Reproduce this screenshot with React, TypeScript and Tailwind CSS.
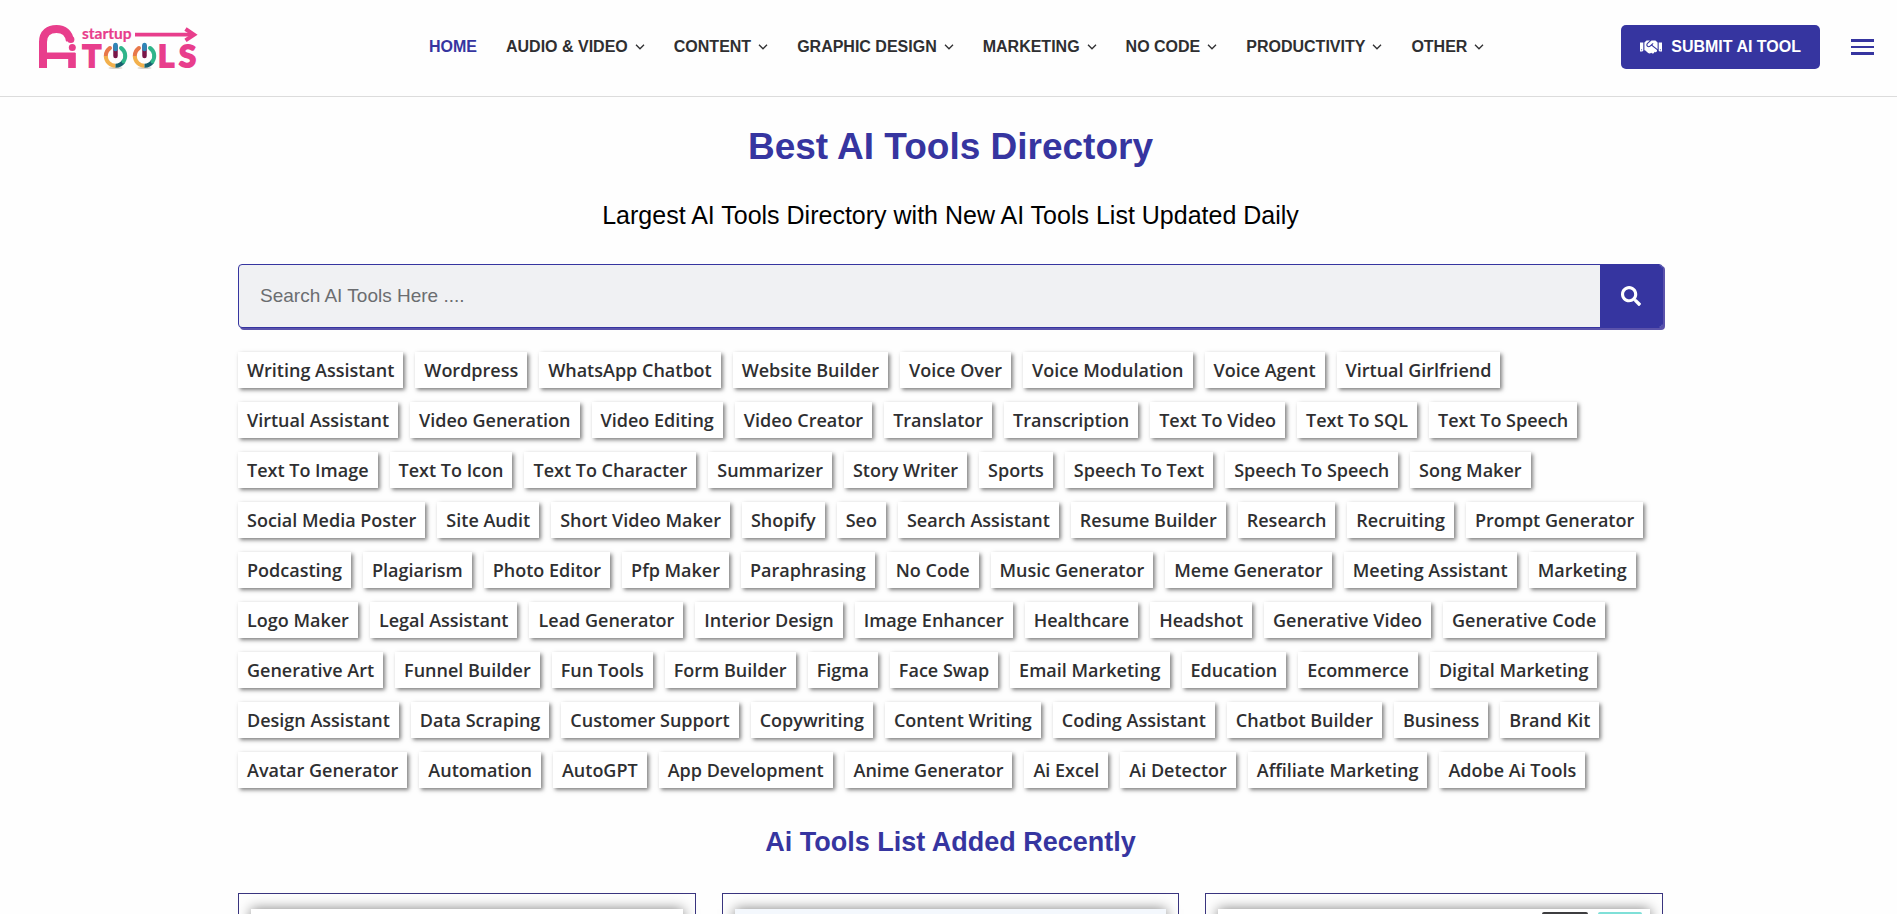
import { FaHandshake, FaSearch } from "react-icons/fa";

const navItems = [
  "AUDIO & VIDEO",
  "CONTENT",
  "GRAPHIC DESIGN",
  "MARKETING",
  "NO CODE",
  "PRODUCTIVITY",
  "OTHER",
];

const tagRows = [
  ["Writing Assistant", "Wordpress", "WhatsApp Chatbot", "Website Builder", "Voice Over", "Voice Modulation", "Voice Agent", "Virtual Girlfriend"],
  ["Virtual Assistant", "Video Generation", "Video Editing", "Video Creator", "Translator", "Transcription", "Text To Video", "Text To SQL", "Text To Speech"],
  ["Text To Image", "Text To Icon", "Text To Character", "Summarizer", "Story Writer", "Sports", "Speech To Text", "Speech To Speech", "Song Maker"],
  ["Social Media Poster", "Site Audit", "Short Video Maker", "Shopify", "Seo", "Search Assistant", "Resume Builder", "Research", "Recruiting", "Prompt Generator"],
  ["Podcasting", "Plagiarism", "Photo Editor", "Pfp Maker", "Paraphrasing", "No Code", "Music Generator", "Meme Generator", "Meeting Assistant", "Marketing"],
  ["Logo Maker", "Legal Assistant", "Lead Generator", "Interior Design", "Image Enhancer", "Healthcare", "Headshot", "Generative Video", "Generative Code"],
  ["Generative Art", "Funnel Builder", "Fun Tools", "Form Builder", "Figma", "Face Swap", "Email Marketing", "Education", "Ecommerce", "Digital Marketing"],
  ["Design Assistant", "Data Scraping", "Customer Support", "Copywriting", "Content Writing", "Coding Assistant", "Chatbot Builder", "Business", "Brand Kit"],
  ["Avatar Generator", "Automation", "AutoGPT", "App Development", "Anime Generator", "Ai Excel", "Ai Detector", "Affiliate Marketing", "Adobe Ai Tools"],
];

function PowerO({ cx }: { cx: number }) {
  return (
    <g fill="none" strokeWidth="4">
      <ellipse cx={cx} cy="44" rx="7" ry="1" fill="#d9d4cc" />
      <path d={`M${cx - 5.5} 24 A9.7 9.7 0 0 0 ${cx - 9.7} 32`} stroke="#e8784a" strokeLinecap="round" />
      <path d={`M${cx - 9.7} 32 A9.7 9.7 0 0 0 ${cx} 41.7`} stroke="#f2b04c" />
      <path d={`M${cx} 41.7 A9.7 9.7 0 0 0 ${cx + 8} 37.5`} stroke="#17616e" />
      <path d={`M${cx + 8} 37.5 A9.7 9.7 0 0 0 ${cx + 5.5} 24`} stroke="#2fb58a" strokeLinecap="round" />
      <path d={`M${cx} 22 V32`} stroke="#7a1648" strokeWidth="4.5" strokeLinecap="round" />
      <path d={`M${cx} 21 V25`} stroke="#2c86b8" strokeWidth="4.5" strokeLinecap="round" />
    </g>
  );
}

function Logo() {
  return (
    <svg viewBox="0 -5 162 56" className="h-14 w-[162px] overflow-visible" role="img" aria-label="Startup Ai Tools">
      <g fill="none" stroke="#e83e8c" strokeWidth="8">
        <path d="M5 44 V18 C5 9 11 5 18.500 5 C26 5 31 9 32 17" />
        <path d="M5 31.700 H34 V44" strokeWidth="6.500" />
        <path d="M34 29 V44" strokeWidth="7.500" />
        <path d="M97 10.700 H155" strokeWidth="3.800" />
        <path d="M147.500 5 L156 10.700 L147.500 16.400" strokeWidth="4" />
      </g>
      <circle cx="32.800" cy="15.500" r="3.600" fill="#e83e8c" />
      <circle cx="34.300" cy="23.500" r="3.500" fill="#e83e8c" />
      <g fill="#e83e8c" stroke="#e83e8c" fontFamily="Lato, sans-serif" fontWeight="700">
        <text x="44" y="14.500" fontSize="15.500" strokeWidth="0.200">startup</text>
        <g fontSize="31" strokeWidth="2">
          <text x="44.500" y="43">T</text>
          <text x="120" y="43">L</text>
          <text x="141" y="43">S</text>
        </g>
      </g>
      <PowerO cx={77.5} />
      <PowerO cx={106.5} />
    </svg>
  );
}

function Chevron() {
  return (
    <svg viewBox="0 0 10 6" className="h-[6px] w-[10px]" fill="none" stroke="currentColor" strokeWidth="1.300" aria-hidden="true">
      <path d="M1 0.800 L5 4.800 L9 0.800" />
    </svg>
  );
}

export default function App() {
  return (
    <div className="h-screen overflow-hidden bg-[#fefefe] font-['Liberation_Sans',Arial,sans-serif] text-[#2f2f31]">
      <header className="flex h-[97px] items-center justify-between border-b border-[#dcdcdc] pr-[23px] pb-[2px] pl-[38px] text-base font-bold">
        <a href="#home" className="w-[162px] shrink-0">
          <Logo />
        </a>
        <nav className="ml-[229px] flex flex-1 items-center gap-[29px] whitespace-nowrap">
          <a href="#home" className="text-[#3635a0]">HOME</a>
          {navItems.map((item) => (
            <a key={item} href="#menu" className="flex items-center gap-[7px]">
              {item}
              <Chevron />
            </a>
          ))}
        </nav>
        <div className="flex shrink-0 items-center gap-[31px]">
          <a href="#submit" className="flex h-11 items-center gap-[9px] rounded-[5px] bg-[#3635a0] px-[19px] text-white">
            <FaHandshake className="h-[18px] w-[22px]" />
            SUBMIT AI TOOL
          </a>
          <button type="button" aria-label="Open menu" className="flex w-[23px] flex-col gap-1">
            <span className="h-[3px] w-full bg-[#3635a0]" />
            <span className="h-[2px] w-full bg-[#3635a0]" />
            <span className="h-[3px] w-full bg-[#3635a0]" />
          </button>
        </div>
      </header>

      <main className="pl-1">
        <div className="mx-auto max-w-[1425px]">
          <h1 className="mt-6 text-center text-[37px] leading-[52px] font-bold text-[#3635a0]">Best AI Tools Directory</h1>
          <p className="mt-6 text-center text-[25px] leading-9 text-black">Largest AI Tools Directory with New AI Tools List Updated Daily</p>

          <form role="search" className="mt-[31px] flex h-[64px] overflow-hidden rounded-[4px] border border-[#3635a0] bg-[#f0f1f3] shadow-[2px_2px_0_#5b53ab]">
            <input
              type="search"
              aria-label="Search AI tools"
              placeholder="Search AI Tools Here ...."
              className="min-w-0 flex-1 px-[21px] text-[19px] outline-none placeholder:text-[#6b6d70]"
            />
            <button type="submit" aria-label="Search" className="flex w-[62px] items-center justify-center bg-[#3635a0] text-white">
              <FaSearch className="size-5" />
            </button>
          </form>

          <div className="mt-6 flex flex-col gap-[14px] font-['Open_Sans',sans-serif] text-lg font-semibold whitespace-nowrap">
            {tagRows.map((row) => (
              <div key={row[0]} className="flex gap-3">
                {row.map((tag) => (
                  <a key={tag} href="#tag" className="flex h-9 items-center bg-white px-[9px] shadow-[2px_2px_4px_rgba(0,0,0,0.5)]">
                    {tag}
                  </a>
                ))}
              </div>
            ))}
          </div>

          <h2 className="mt-[34px] text-center text-[27px] leading-10 font-bold text-[#3635a0]">Ai Tools List Added Recently</h2>

          <div className="mt-[31px] grid grid-cols-3 gap-[26px]">
            <article className="h-80 border border-[#3a357f] px-3 pt-[15px]">
              <div className="h-60 bg-white shadow-[0_0_12px_rgba(0,0,0,0.5)]" />
            </article>
            <article className="h-80 border border-[#3a357f] px-3 pt-[15px]">
              <div className="h-60 bg-[#f4f8fd] shadow-[0_0_12px_rgba(0,0,0,0.5)]" />
            </article>
            <article className="h-80 border border-[#3a357f] px-3 pt-[15px]">
              <div className="flex h-60 justify-end gap-[10px] bg-white px-2 pt-[3px] shadow-[0_0_12px_rgba(0,0,0,0.5)]">
                <div className="h-5 w-[46px] rounded-[2px] bg-[#3d3d40]" />
                <div className="h-5 w-[44px] rounded-[2px] bg-[#7fe0d8]" />
              </div>
            </article>
          </div>
        </div>
      </main>
    </div>
  );
}
